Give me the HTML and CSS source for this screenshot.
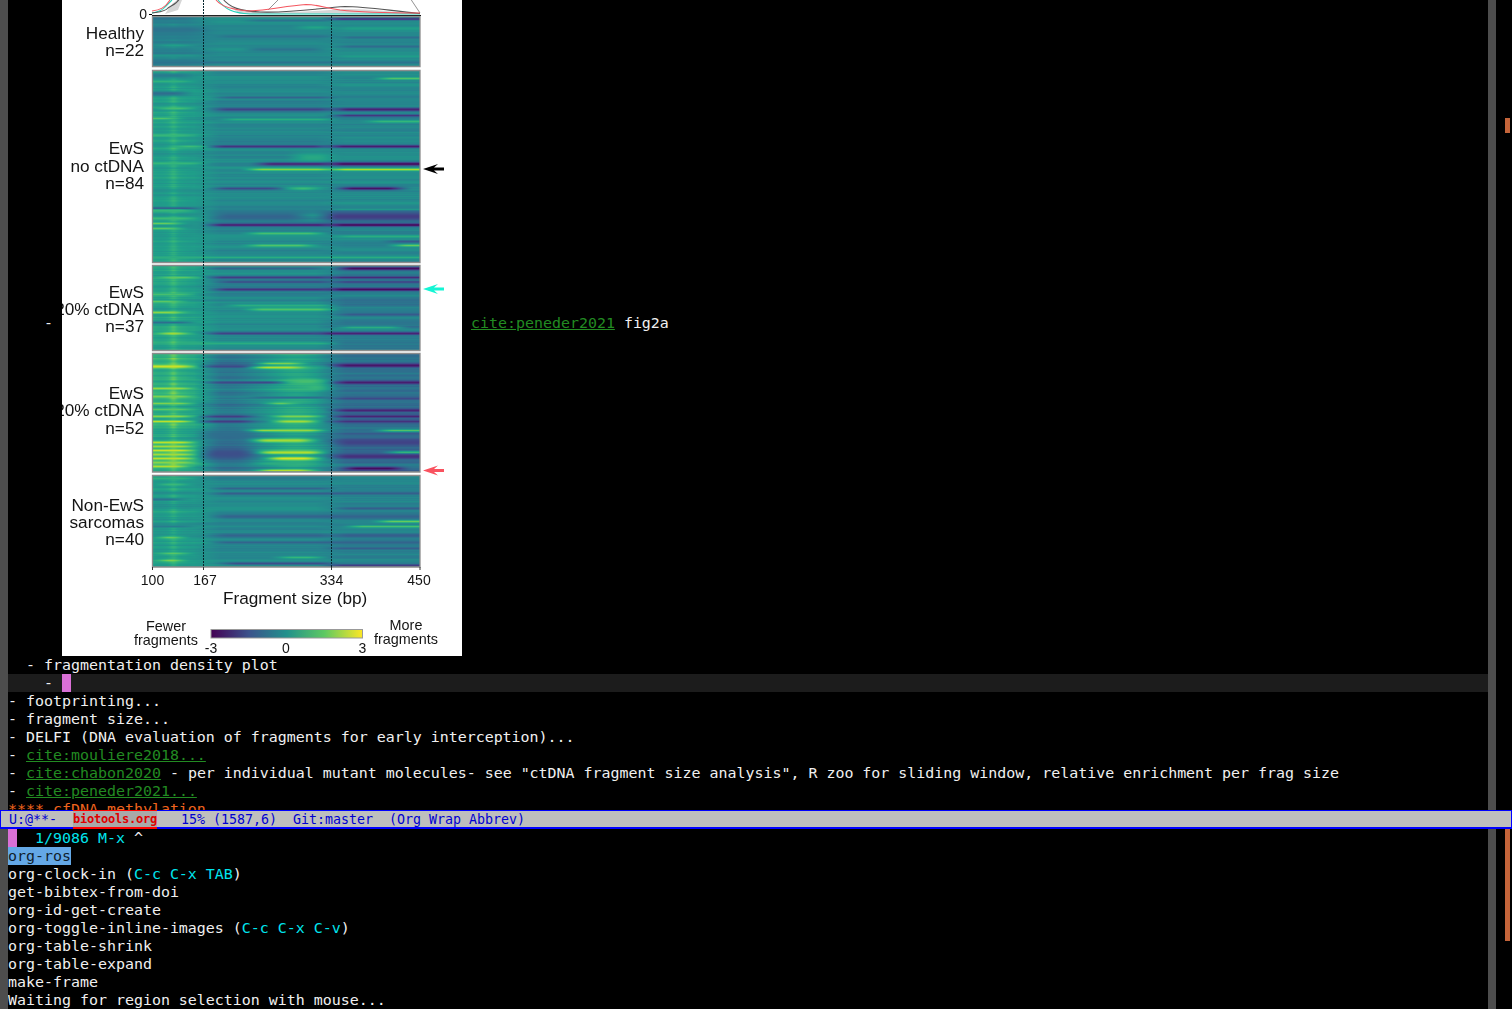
FILE: index.html
```html
<!DOCTYPE html>
<html lang="en">
<head>
<meta charset="utf-8">
<title>biotools.org</title>
<link rel="stylesheet" href="styles.css">
</head>
<body>
<div class="frame">
  <section class="window upper">
    <div class="fringe"></div>
    <div class="buffer">
      <div class="image-row">
        <span class="bullet">-</span>
        <figure class="figure">
          <div class="panels">
            <canvas class="heat" data-panel="0" width="268" height="50"></canvas>
            <canvas class="heat gap4" data-panel="1" width="268" height="192"></canvas>
            <canvas class="heat gap3" data-panel="2" width="268" height="85"></canvas>
            <canvas class="heat gap3" data-panel="3" width="268" height="119"></canvas>
            <canvas class="heat gap3" data-panel="4" width="268" height="92"></canvas>
          </div>
          <svg class="overlay" viewBox="62 -10 400 666" width="400" height="666">
            <defs>
              <linearGradient id="viridis">
                <stop offset="0" stop-color="#440154"/>
                <stop offset=".25" stop-color="#3b528b"/>
                <stop offset=".5" stop-color="#21918c"/>
                <stop offset=".75" stop-color="#5ec962"/>
                <stop offset="1" stop-color="#fde725"/>
              </linearGradient>
            </defs>
            <path class="fill" d="M225 3C235 10 245 12 270 12C300 13 325 10 345 9C370 9 395 12 420 14L300 14L240 14Z"/>
            <path class="fill" d="M165 14L172 4L177 0L182 0L178 10Z"/>
            <path class="thin" d="M268 10L280 -2M410 -2L420 13"/>
            <path class="teal" d="M152 13C158 12 162 11 165 7L172 0M218 0C225 9 232 13 250 14L420 14"/>
            <path class="grey" d="M152 13C158 12 165 12 168 8C172 5 176 5 180 -2M222 -2C230 8 240 11 260 12C295 13 320 8 345 6.500C365 6.500 385 10 420 13.500"/>
            <path class="red" d="M152 11C160 10 165 8 170 0M216 0C222 7 232 10 250 11C270 10 285 6 306 4.500C316 4.500 322 7 340 10C365 13 390 13 420 13"/>
            <path class="axis" d="M149 14.500H152M152 15.500H421"/>
            <path class="box" d="M152.500 16.500H420V66.500H152.500ZM152.500 70.500H420V262.500H152.500ZM152.500 265.500H420V350.500H152.500ZM152.500 353.500H420V472H152.500ZM152.500 475.500H420V567H152.500Z"/>
            <path class="dash" d="M203.500 0V567M331.500 16V567"/>
            <path class="ticks" d="M152.500 567V570M203.500 567V570M331.500 567V570M420 567V570"/>
            <g class="small end"><text x="147" y="19">0</text></g>
            <g class="lab end">
              <text x="144" y="39">Healthy</text>
              <text x="144" y="56">n=22</text>
              <text x="144" y="154">EwS</text>
              <text x="144" y="172">no ctDNA</text>
              <text x="144" y="189">n=84</text>
              <text x="144" y="298">EwS</text>
              <text x="144" y="315">&lt;20% ctDNA</text>
              <text x="144" y="332">n=37</text>
              <text x="144" y="399">EwS</text>
              <text x="144" y="416">&gt;20% ctDNA</text>
              <text x="144" y="434">n=52</text>
              <text x="144" y="511">Non-EwS</text>
              <text x="144" y="528">sarcomas</text>
              <text x="144" y="545">n=40</text>
            </g>
            <g class="small mid">
              <text x="152.500" y="585">100</text>
              <text x="205" y="585">167</text>
              <text x="331.500" y="585">334</text>
              <text x="419" y="585">450</text>
              <text x="211" y="653">-3</text>
              <text x="286" y="653">0</text>
              <text x="362.500" y="653">3</text>
            </g>
            <text class="lab" x="223" y="604">Fragment size (bp)</text>
            <g class="legend mid">
              <text x="166" y="631">Fewer</text>
              <text x="166" y="645">fragments</text>
              <text x="406" y="630">More</text>
              <text x="406" y="644">fragments</text>
            </g>
            <rect class="bar" x="211" y="629.500" width="151.500" height="8.500"/>
            <path class="arrow-black" d="M423 169L438 164L434 167.500H444V170.500H434L438 174Z"/>
            <path class="arrow-cyan" d="M423 289L438 284L434 287.500H444V290.500H434L438 294Z"/>
            <path class="arrow-red" d="M423 470.500L438 465.500L434 469H444V472H434L438 475.500Z"/>
          </svg>
        </figure>
        <span class="after-image"><a class="cite">cite:peneder2021</a> fig2a</span>
      </div>
      <div class="line"><span class="ws2"></span>- fragmentation density plot</div>
      <div class="line current"><span class="ws4"></span>- <span class="cursor"></span></div>
      <div class="line">- footprinting...</div>
      <div class="line">- fragment size...</div>
      <div class="line">- DELFI (DNA evaluation of fragments for early interception)...</div>
      <div class="line">- <a class="cite">cite:mouliere2018...</a></div>
      <div class="line">- <a class="cite">cite:chabon2020</a> - per individual mutant molecules- see "ctDNA fragment size analysis", R zoo for sliding window, relative enrichment per frag size</div>
      <div class="line">- <a class="cite">cite:peneder2021...</a></div>
      <div class="line heading">**** cfDNA methylation</div>
    </div>
    <div class="fringe"></div>
    <div class="side"><span class="thumb thumb-upper"></span></div>
  </section>
  <div class="modeline"><span class="ml-a">U:@**-</span><span class="ml-name">biotools.org</span><span class="ml-b">15% (1587,6)</span><span class="ml-c">Git:master</span><span class="ml-d">(Org Wrap Abbrev)</span></div>
  <section class="window mini">
    <div class="fringe"></div>
    <div class="buffer">
      <div class="line"><span class="cursor"></span><span class="prompt"><span class="ws2"></span>1/9086 M-x </span>^</div>
      <div class="line"><span class="match">org-ros</span></div>
      <div class="line">org-clock-in (<span class="key">C-c C-x TAB</span>)</div>
      <div class="line">get-bibtex-from-doi</div>
      <div class="line">org-id-get-create</div>
      <div class="line">org-toggle-inline-images (<span class="key">C-c C-x C-v</span>)</div>
      <div class="line">org-table-shrink</div>
      <div class="line">org-table-expand</div>
      <div class="line">make-frame</div>
      <div class="line">Waiting for region selection with mouse...</div>
    </div>
    <div class="fringe"></div>
    <div class="side"><span class="thumb thumb-mini"></span></div>
  </section>
</div>
<script src="heatmap.js"></script>
</body>
</html>
```
FILE: styles.css
```css
* { box-sizing: border-box; }
html, body { margin: 0; height: 100%; background: #000; overflow: hidden; }
.frame {
  width: 1512px; height: 1009px; display: flex; flex-direction: column;
  font-family: "DejaVu Sans Mono", monospace; font-size: 14.95px; line-height: 18px; color: #f0f0f0;
}
.window { display: flex; min-height: 0; }
.upper { height: 810px; flex: none; overflow: hidden; }
.mini { flex: 1; }
.fringe { width: 8px; flex: none; background: #4d4d4d; }
.buffer { flex: 1; min-width: 0; overflow: hidden; }
.side { width: 16px; flex: none; padding: 0 2px 0 9px; }
.thumb { display: block; width: 5px; background: #c4643a; }
.thumb-upper { height: 15px; margin-top: 118px; }
.thumb-mini { height: 112px; }

.image-row { display: flex; align-items: center; margin-top: -10px; height: 666px; padding-left: 36px; }
.bullet { width: 18px; flex: none; }
.after-image { margin-left: 9px; white-space: pre; }
.figure { position: relative; margin: 0; width: 400px; height: 666px; flex: none; background: #fff; overflow: hidden; padding: 26px 0 0 90px; }
.panels { display: flex; flex-direction: column; align-items: flex-start; }
.heat { display: block; width: 268px; filter: blur(.7px); }
.gap4 { margin-top: 4px; }
.gap3 { margin-top: 3px; }
.overlay { position: absolute; left: 0; top: 0; overflow: hidden; filter: blur(.3px); }
.overlay text { font-family: "Liberation Sans", Arial, sans-serif; fill: #141414; }
.lab text, text.lab { font-size: 17.200px; }
.small text { font-size: 14px; }
.legend text { font-size: 14.400px; }
.end text { text-anchor: end; }
.mid text { text-anchor: middle; }
.fill { fill: #d6d6d6; }
.thin { fill: none; stroke: #777; stroke-width: .8; }
.teal { fill: none; stroke: #25d4bb; stroke-width: 1.100; }
.grey { fill: none; stroke: #555; stroke-width: 1.100; }
.red { fill: none; stroke: #f4565f; stroke-width: 1.100; }
.axis { fill: none; stroke: #000; stroke-width: 1.200; }
.box { fill: none; stroke: #8c8c8c; stroke-width: 1.300; }
.dash { fill: none; stroke: #06242c; stroke-width: 1; stroke-dasharray: 2 1; }
.ticks { fill: none; stroke: #333; stroke-width: 1; }
.bar { fill: url(#viridis); stroke: #999; stroke-width: 1; }
.arrow-black { fill: #000; }
.arrow-cyan { fill: #14f5d4; }
.arrow-red { fill: #f9525f; }

.line { height: 18px; white-space: pre; }
.ws2 { display: inline-block; width: 18px; }
.ws4 { display: inline-block; width: 36px; }
.current { background: #1c1c1c; }
.cursor { display: inline-block; width: 9px; height: 18px; vertical-align: top; background: #da70d6; }
.cite { color: #228b22; text-decoration: underline; }
.heading { color: #f0641e; }

.modeline {
  height: 19px; flex: none; display: flex; background: #bebebe; color: #0000d0;
  border: 1px solid #0000ff; border-width: 1px 1px 2px 1px;
  font-size: 13.300px; line-height: 18px; padding-left: 8px; white-space: pre;
}
.ml-a { width: 64px; }
.ml-name {
  width: 84px; margin: -1px 0 -2px; height: 19px; background: #a9a9a9; color: #e00000;
  border-top: 1px solid #ff0000; border-bottom: 2px solid #ff0000;
  font-size: 12px; font-weight: bold; letter-spacing: -.224px; line-height: 17px;
}
.ml-b { margin-left: 24px; width: 112px; }
.ml-c { width: 96px; }

.prompt { color: #00e5ee; }
.match { background: #64a8e6; color: #10202c; }
.key { color: #00e5ee; }
```
FILE: heatmap.js
```js
// Fragment-density heatmaps: viridis colour scale, base column profile, seeded row noise and stripes.
(function () {
  var VIR = [[68,1,84],[72,40,120],[62,74,137],[49,104,142],[38,130,142],[31,158,137],[53,183,121],[110,206,88],[181,222,43],[253,231,37]];
  function colour(t) {
    t = Math.max(0, Math.min(.9999, t)) * (VIR.length - 1);
    var i = Math.floor(t), f = t - i, a = VIR[i], b = VIR[i + 1];
    return [a[0] + (b[0] - a[0]) * f, a[1] + (b[1] - a[1]) * f, a[2] + (b[2] - a[2]) * f];
  }
  function rng(seed) {
    return function () { seed = (seed * 1664525 + 1013904223) >>> 0; return seed / 4294967296; };
  }
  function edge(x, a, b, s) {
    var l = a <= 152 ? 1 : Math.min(1, Math.max(0, (x - a) / s + .5));
    var r = b >= 420 ? 1 : Math.min(1, Math.max(0, (b - x) / s + .5));
    l = l * l * (3 - 2 * l); r = r * r * (3 - 2 * r);
    return l * r;
  }
  function bell(x, c, w) { return Math.exp(-Math.pow((x - c) / w, 2)); }
  // panel: top (page y), left/mid/right base level, noise amplitude, stripes [y, half-thickness, x0, x1, level]
  var PANELS = [
    { top: 16, left: .44, mid: .49, right: .48, noise: .03, s: [
      [18.5,1.3,330,420,.14],[18,2,152,190,.38],[20,1.3,250,330,.38],[29,2.5,152,200,.38],[36,1.5,220,330,.38],
      [37,1.5,340,420,.36],[45,1.3,160,190,.56],[46,1.5,340,420,.35],[49,2,250,320,.38],[55,1.3,152,200,.52],
      [56,1.3,340,420,.55],[28,2,340,420,.56],[62,1.5,152,420,.38],[27,2,300,330,.58]
    ]},
    { top: 70, left: .56, mid: .47, right: .47, noise: .045, s: [
      [75,2.5,152,190,.42],[78,1.3,380,420,.72],[81,1.3,152,190,.64],[93,2.5,152,185,.36],[97,1.3,220,330,.32],
      [109,1.8,215,330,.2],[109,2,335,420,.1],[108,1.3,160,190,.7],[115,1.3,335,420,.16],[118,1.3,152,175,.72],
      [119,1.3,225,330,.62],[121,1.3,370,420,.66],[135,1.3,152,190,.66],[146,1.5,212,325,.15],[146,1.7,330,420,.08],
      [146,1.3,175,203,.68],[157,5,295,330,.6],[163.500,1.7,260,330,.1],[163.500,2,330,420,.03],[169,1.4,250,330,.82],
      [169,1.4,333,420,.88],[163,1.3,152,200,.66],[188,1.5,215,280,.22],[188,1.7,340,400,.05],[188,1.700,290,315,.68],
      [208,1.3,152,195,.18],[209,1.1,330,420,.62],[216,4.5,215,300,.32],[216,5.5,325,420,.18],[224.500,1.7,210,330,.08],
      [224.500,1.700,330,420,.02],[210,1.8,152,190,.66],[218,1.3,152,190,.68],[223,1.3,152,178,.76],[228,1.3,152,178,.74],
      [233,1.4,250,320,.7],[236,1.3,340,420,.62],[241,1.3,390,420,.28],[245,1.4,250,310,.72],[245,1.4,395,420,.76],[257,1.3,152,420,.62]
    ]},
    { top: 265, left: .58, mid: .47, right: .42, noise: .05, s: [
      [268,1.800,340,420,.03],[268,1.3,210,320,.32],[277,1.500,210,330,.18],[277,1.4,330,420,.12],[281.500,1.3,220,330,.24],
      [281.500,1.3,335,420,.2],[277,1.3,160,195,.74],[289,1.600,215,330,.15],[289,1.700,330,420,.03],[294,1.3,152,190,.7],
      [301,1.3,152,180,.74],[305,1.4,230,330,.62],[309,1.700,250,330,.72],[312,1.3,152,180,.82],[314,1.5,340,420,.28],
      [322,1.3,152,190,.36],[333,1.4,210,320,.2],[333,1.600,320,420,.1],[333,1.500,160,185,.86],[327,1.4,340,400,.62],[343,1.3,180,330,.62]
    ]},
    { top: 353, left: .62, mid: .46, right: .36, noise: .06, ridge: .13, s: [
      [366,1.700,152,190,.92],[366,1.700,205,250,.22],[365,2,335,420,.06],[363,1.4,260,300,.8],[367,1.4,255,300,.88],
      [382,1.400,210,280,.22],[382,1.700,335,420,.08],[381,3.500,290,322,.7],[387,3.500,305,325,.68],[388,1.3,152,190,.84],
      [396,1.3,152,190,.8],[397,1.3,250,330,.36],[398,1.4,335,420,.22],[403,1.3,152,190,.8],[403,1.3,270,290,.78],
      [409,1.3,152,190,.74],[410,1.700,335,420,.1],[416,1.4,205,250,.18],[416,1.4,275,318,.8],[416,1.4,335,420,.1],[416,1.3,152,190,.82],
      [421,1.4,205,250,.18],[421,1.700,275,315,.86],[421,1.3,152,190,.9],[421,1.4,335,420,.14],[430,1.4,250,320,.84],
      [430,1.3,380,420,.72],[434,4,205,250,.36],[440,2.200,255,310,.86],[442,4.500,335,420,.2],
      [442,1.4,152,192,.9],[446,1.4,152,192,.86],[450,1.4,152,192,.92],[454,1.4,152,192,.86],[458,1.4,152,192,.9],[462,1.4,152,192,.82],[466,1.4,152,185,.88],
      [452,2,260,320,.88],[452,1.4,390,420,.76],[453,7.500,205,250,.24],[456,3,335,420,.14],
      [458,1.800,270,315,.94],[463,1.4,260,300,.62],[468,1.800,345,400,.03],[470,1.3,260,310,.88]
    ]},
    { top: 475, left: .54, mid: .47, right: .45, noise: .045, s: [
      [478,1.3,152,190,.64],[484,1.3,160,185,.68],[488,1.3,215,330,.32],[493,1.5,215,420,.3],[499,1.3,152,180,.38],
      [508,1.3,340,420,.3],[516,2.500,215,420,.32],[521,1.3,380,420,.76],[526,1.3,350,420,.7],[526,1.3,152,190,.42],
      [535,2,215,330,.32],[535,2.500,335,420,.3],[537,1.4,160,180,.78],[542,1.4,215,420,.32],[548,1.4,330,420,.3],
      [553,1.3,160,185,.74],[560,1.4,160,180,.82],[557,1.3,280,320,.66],[563,1.4,225,330,.24],[565,1.600,330,420,.18]
    ]}
  ];
  var canvases = document.querySelectorAll('.heat');
  for (var c = 0; c < canvases.length; c++) draw(canvases[c]);

  function draw(cv) {
    var p = PANELS[+cv.dataset.panel], w = cv.width, h = cv.height;
    var ctx = cv.getContext('2d'), img = ctx.createImageData(w, h), r = rng(17 + p.top);
    var lowL = [], lowM = [], lowR = [];
    for (var j = 0; j < h + 3; j++) {
      lowL.push(r() - .5); lowM.push(r() - .5); lowR.push(r() - .5);
    }
    function smooth(a, j) { return (a[j] * 2 + a[j + 1] * 1.5 + a[j + 2]) / 3; }
    for (var y = 0; y < h; y++) {
      var py = p.top + y;
      var nL = smooth(lowL, y), nM = smooth(lowM, y), nR = smooth(lowR, y);
      for (var x = 0; x < w; x++) {
        var px = 152 + x, v;
        var toMid = Math.min(1, Math.max(0, (px - 185) / 35));
        var toRight = Math.min(1, Math.max(0, (px - 315) / 30));
        v = p.left + (p.mid - p.left) * toMid;
        v += (p.right - p.mid) * toRight;
        var n = nL * (1 - toMid) + (nM * (1 - toRight) + nR * toRight) * toMid;
        v += n * p.noise * 2.2;
        if (p.ridge) v += p.ridge * bell(px, 295, 28) - p.ridge * .5 * bell(px, 228, 22);
        if (px < 195) {
          var bump = bell(px, 173, 3.5) * .1 + Math.cos((px - 173) / 4.2) * .025;
          v += bump * Math.max(0, (v - .42) * 3.5);
        }
        for (var k = 0; k < p.s.length; k++) {
          var s = p.s[k], d = (py - s[0]) / s[1];
          if (d > 3 || d < -3) continue;
          v += (s[4] - v) * Math.exp(-d * d) * edge(px, s[2], s[3], 28);
        }
        var col = colour(v), i = (y * w + x) * 4;
        img.data[i] = col[0]; img.data[i + 1] = col[1]; img.data[i + 2] = col[2]; img.data[i + 3] = 255;
      }
    }
    ctx.putImageData(img, 0, 0);
  }
})();
```
